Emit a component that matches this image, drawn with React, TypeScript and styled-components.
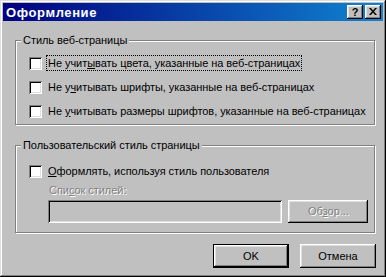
import { FC, ReactNode } from 'react'
import styled, { createGlobalStyle } from 'styled-components'

const GlobalStyle = createGlobalStyle`
  html, body {
    margin: 0;
    padding: 0;
    background: #c0c0c0;
  }
  * {
    box-sizing: border-box;
  }
`

const raised = `
  box-shadow: inset -1px -1px #000, inset 1px 1px #fff, inset -2px -2px #808080, inset 2px 2px #dfdfdf;
`
const sunken = `
  box-shadow: inset 1px 1px #808080, inset -1px -1px #fff, inset 2px 2px #000, inset -2px -2px #dfdfdf;
`

const Mn: FC<{ children: ReactNode }> = ({ children }) => <u>{children}</u>

function Check(props: { label: ReactNode; focused?: boolean }): JSX.Element {
  return (
    <Row>
      <CheckBox />
      <Label $focused={props.focused}>{props.label}</Label>
    </Row>
  )
}

function App(): JSX.Element {
  return (
    <>
      <GlobalStyle />
      <Window>
        <TitleBar>
          <Title>Оформление</Title>
          <TitleButtons>
            <CaptionButton aria-label="Справка">?</CaptionButton>
            <CaptionButton aria-label="Закрыть">
              <svg width="8" height="7" viewBox="0 0 8 7">
                <path d="M0 0h2l2 2.5 2-2.5h2L5 3.5 8 7H6L4 4.5 2 7H0l3-3.5z" fill="#000" />
              </svg>
            </CaptionButton>
          </TitleButtons>
        </TitleBar>

        <Body>
          <GroupBox>
            <Legend>Стиль веб-страницы</Legend>
            <Rows>
              <Check
                focused
                label={
                  <>
                    Не учит<Mn>ы</Mn>вать цвета, указанные на веб-страницах
                  </>
                }
              />
              <Check
                label={
                  <>
                    Не у<Mn>ч</Mn>итывать шрифты, указанные на веб-страницах
                  </>
                }
              />
              <Check
                label={
                  <>
                    Не <Mn>у</Mn>читывать размеры шрифтов, указанные на веб-страницах
                  </>
                }
              />
            </Rows>
          </GroupBox>

          <GroupBox $second>
            <Legend>Пользовательский стиль страницы</Legend>
            <Rows $top={17}>
              <Check
                label={
                  <>
                    <Mn>О</Mn>формлять, используя стиль пользователя
                  </>
                }
              />
            </Rows>
            <StyleBlock>
              <DisabledText>
                Спи<Mn>с</Mn>ок стилей:
              </DisabledText>
              <FieldRow>
                <TextField />
                <PushButton $width={80} disabled>
                  <DisabledText>
                    Об<Mn>з</Mn>ор...
                  </DisabledText>
                </PushButton>
              </FieldRow>
            </StyleBlock>
          </GroupBox>

          <ButtonRow>
            <PushButton $default>OK</PushButton>
            <PushButton>Отмена</PushButton>
          </ButtonRow>
        </Body>
      </Window>
    </>
  )
}

const Window = styled.div`
  width: 386px;
  height: 277px;
  padding: 3px;
  background: #c0c0c0;
  box-shadow: inset -1px -1px #000, inset 1px 1px #dfdfdf, inset -2px -2px #808080, inset 2px 2px #fff;
  display: flex;
  flex-direction: column;
  font-family: 'Liberation Sans', Arial, sans-serif;
  font-size: 11px;
  letter-spacing: -0.05px;
  color: #000;
`

const TitleBar = styled.div`
  height: 18px;
  display: flex;
  align-items: center;
  justify-content: space-between;
  padding: 0 2px 0 3px;
  background: linear-gradient(90deg, #000080 0%, #1084d0 100%);
`

const Title = styled.span`
  color: #fff;
  font-weight: bold;
  font-size: 13px;
  letter-spacing: 0.6px;
`

const TitleButtons = styled.div`
  display: flex;
  gap: 2px;
`

const CaptionButton = styled.div`
  width: 16px;
  height: 14px;
  background: #c0c0c0;
  ${raised}
  display: flex;
  align-items: center;
  justify-content: center;
  font-weight: bold;
  font-size: 11px;
  line-height: 14px;
  padding-bottom: 1px;
`

const Body = styled.div`
  flex: 1;
  display: flex;
  flex-direction: column;
  padding: 19px 8px 0 12px;
`

const GroupBox = styled.div<{ $second?: boolean }>`
  position: relative;
  border: 1px solid #808080;
  box-shadow: inset 1px 1px #fff, 1px 1px #fff;
  margin-top: ${(p) => (p.$second ? '20px' : '0')};
  padding-bottom: ${(p) => (p.$second ? '9px' : '5px')};
`

const Legend = styled.span`
  position: absolute;
  top: -7px;
  left: 5px;
  padding: 0 2px;
  line-height: 13px;
  background: #c0c0c0;
`

const Rows = styled.div<{ $top?: number }>`
  display: flex;
  flex-direction: column;
  gap: 8px;
  padding-top: ${(p) => p.$top ?? 14}px;
`

const Row = styled.div`
  height: 16px;
  display: flex;
  align-items: center;
  gap: 4px;
  padding-left: 13px;
`

const CheckBox = styled.span`
  width: 13px;
  height: 13px;
  flex: none;
  background: #fff;
  ${sunken}
`

const Label = styled.span<{ $focused?: boolean }>`
  height: 16px;
  line-height: 14px;
  padding: 0 1px;
  border: 1px dotted ${(p) => (p.$focused ? '#000' : 'transparent')};
  white-space: nowrap;
`

const StyleBlock = styled.div`
  margin-left: 32px;
  padding-top: 5px;
  display: flex;
  flex-direction: column;
  gap: 3px;
`

const DisabledText = styled.span`
  line-height: 13px;
  color: #808080;
  text-shadow: 1px 1px 0 #fff;
  padding-left: 1px;
`

const FieldRow = styled.div`
  display: flex;
  gap: 6px;
`

const TextField = styled.div`
  width: 234px;
  height: 23px;
  background: #c0c0c0;
  ${sunken}
`

const PushButton = styled.button<{ $default?: boolean; $width?: number }>`
  width: ${(p) => p.$width ?? 76}px;
  height: ${(p) => (p.$width ? 23 : 24)}px;
  padding: 0;
  margin: 0;
  font: inherit;
  color: #000;
  background: #c0c0c0;
  border: ${(p) => (p.$default ? '1px solid #000' : 'none')};
  ${raised}
  display: flex;
  align-items: center;
  justify-content: center;
  outline: none;
`

const ButtonRow = styled.div`
  display: flex;
  justify-content: flex-end;
  gap: 11px;
  margin-top: 11px;
  margin-right: -1px;
`

export default App
